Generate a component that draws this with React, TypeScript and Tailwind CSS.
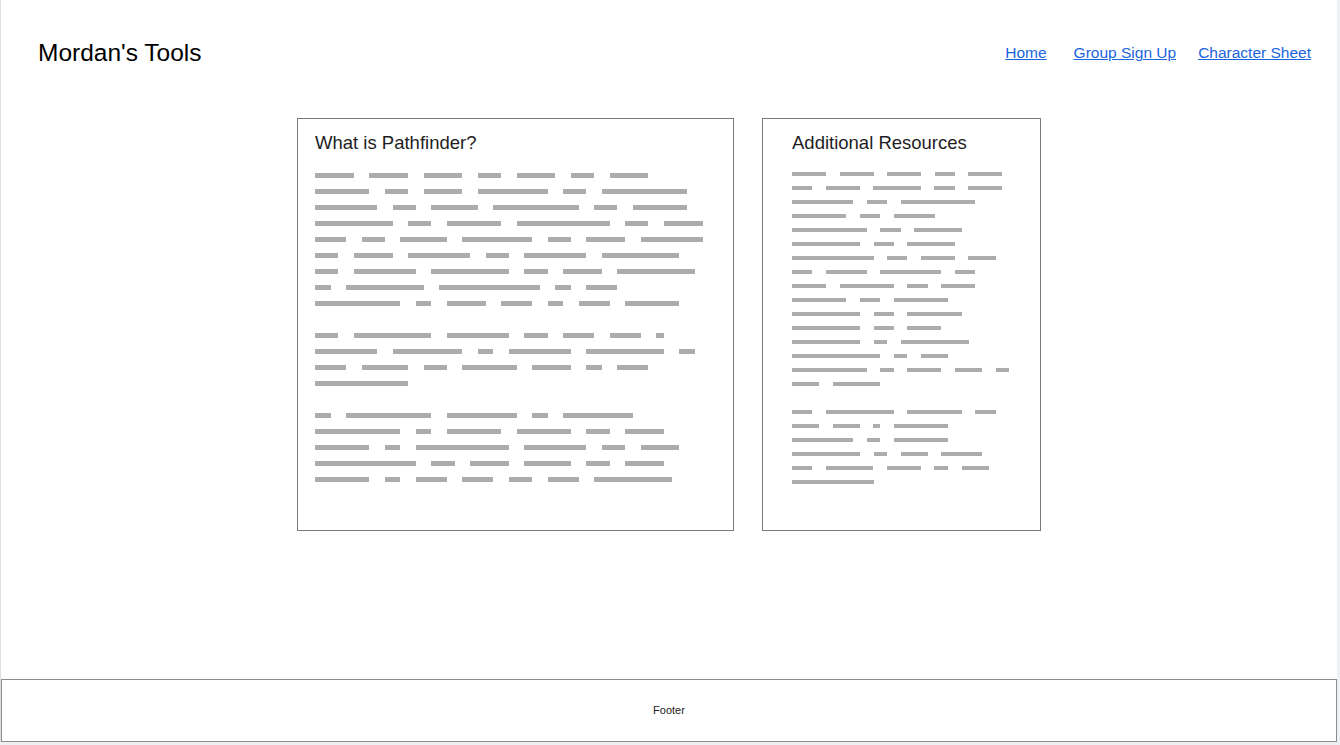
import React from "react";

// word lengths in "units" for the greyed-out placeholder text
const PATHFINDER: number[][][] = [
    [
        [5, 5, 5, 3, 5, 3, 5],
        [7, 3, 5, 9, 3, 11],
        [8, 3, 6, 11, 3, 7],
        [10, 3, 7, 12, 3, 5],
        [4, 3, 6, 9, 3, 5, 8],
        [3, 5, 8, 3, 8, 10],
        [3, 8, 10, 3, 5, 10],
        [2, 10, 13, 2, 4],
        [11, 2, 5, 4, 2, 4, 7],
    ],
    [
        [3, 10, 8, 3, 4, 4, 1],
        [8, 9, 2, 8, 10, 2],
        [4, 6, 3, 7, 5, 2, 4],
        [12],
    ],
    [
        [2, 11, 9, 2, 9],
        [11, 2, 7, 7, 3, 5],
        [7, 2, 12, 8, 3, 5],
        [13, 3, 5, 6, 3, 5],
        [7, 2, 4, 4, 3, 4, 10],
    ],
];

const RESOURCES: number[][][] = [
    [
        [5, 5, 5, 3, 5],
        [3, 5, 7, 3, 5],
        [9, 3, 11],
        [8, 3, 6],
        [11, 3, 7],
        [10, 3, 7],
        [12, 3, 5, 4],
        [3, 6, 9, 3],
        [5, 8, 3, 5],
        [8, 3, 8],
        [10, 3, 8],
        [10, 3, 5],
        [10, 2, 10],
        [13, 2, 4],
        [11, 2, 5, 4, 2],
        [4, 7],
    ],
    [
        [3, 10, 8, 3],
        [4, 4, 1, 8],
        [9, 2, 8],
        [10, 2, 4, 6],
        [3, 7, 5, 2, 4],
        [12],
    ],
];

type BlockProps = {
    paragraphs: number[][][];
    unit: number;
    large?: boolean;
};

const Redacted: React.FC<BlockProps> = ({ paragraphs, unit, large }) => (
    <div className={`flex flex-col ${large ? "gap-[16px]" : "gap-[14px]"}`}>
        {paragraphs.map((rows, p) => (
            <div key={p} className="flex flex-col">
                {rows.map((words, r) => (
                    <div
                        key={r}
                        className={`flex items-center ${
                            large ? "h-[16px] gap-[15.5px]" : "h-[14px] gap-[13.5px]"
                        }`}
                    >
                        {words.map((w, i) => (
                            <span
                                key={i}
                                className={`block bg-[#acacac] ${large ? "h-[5px]" : "h-[4px]"}`}
                                style={{ width: w * unit }}
                            />
                        ))}
                    </div>
                ))}
            </div>
        ))}
    </div>
);

export default function App() {
    return (
        <div className="min-h-screen bg-[#eef0f3] font-['Liberation_Sans',Arial,sans-serif]">
            <div className="flex h-[742px] w-[1337px] flex-col border-l border-[#dedede] bg-white">
                <header className="flex h-[106px] items-center justify-between pl-[37px] pr-[26px]">
                    <h1 className="text-[24.5px] leading-[28px] text-black">Mordan's Tools</h1>
                    <nav className="flex items-center text-[15.5px] text-[#1a64dc]">
                        <a href="#" className="underline">
                            Home
                        </a>
                        <a href="#" className="ml-[27px] underline">
                            Group Sign Up
                        </a>
                        <a href="#" className="ml-[22px] underline">
                            Character Sheet
                        </a>
                    </nav>
                </header>

                <main className="flex flex-1 justify-center gap-[28px] pt-[12px]">
                    <section className="h-[413px] w-[437px] border border-[#7a7a7a] px-[17px] pt-[13px]">
                        <h2 className="text-[18.5px] leading-[22px] text-[#1e1e1e]">What is Pathfinder?</h2>
                        <div className="mt-[13px]">
                            <Redacted paragraphs={PATHFINDER} unit={7.75} large />
                        </div>
                    </section>

                    <section className="h-[413px] w-[279px] border border-[#7a7a7a] px-[29px] pt-[13px]">
                        <h2 className="text-[18.5px] leading-[22px] text-[#1e1e1e]">Additional Resources</h2>
                        <div className="mt-[13px]">
                            <Redacted paragraphs={RESOURCES} unit={6.8} />
                        </div>
                    </section>
                </main>

                <footer className="flex h-[63px] items-center justify-center border border-[#8c8c8c] text-[11px] text-[#222]">
                    Footer
                </footer>
            </div>
        </div>
    );
}
